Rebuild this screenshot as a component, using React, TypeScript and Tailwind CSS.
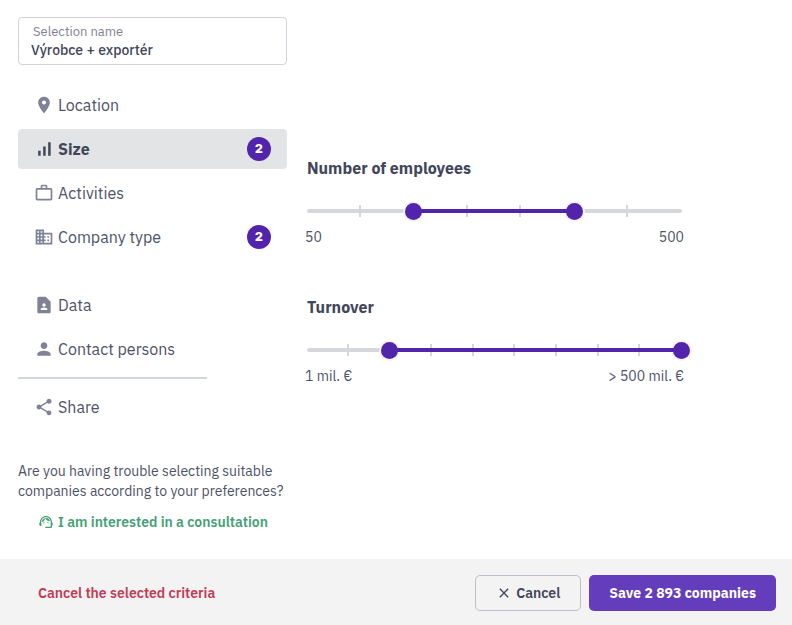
import { ReactNode, useState } from "react";
import { IconType } from "react-icons";
import {
  MdBusiness,
  MdClose,
  MdContactPage,
  MdLocationOn,
  MdPerson,
  MdShare,
  MdSignalCellularAlt,
  MdSupportAgent,
  MdWorkOutline,
} from "react-icons/md";
import clsx from "clsx";

type NavItemProps = {
  icon: IconType;
  label: string;
  count?: number;
  active?: boolean;
  onClick: () => void;
};

function NavItem({ icon: Icon, label, count, active, onClick }: NavItemProps) {
  return (
    <button
      type="button"
      onClick={onClick}
      aria-current={active ? "page" : undefined}
      className={clsx(
        "flex h-10 w-full items-center gap-1 rounded px-4 text-left text-base",
        active ? "bg-[#e3e4e6] font-bold text-[#41465b]" : "text-[#4d5268]",
      )}
    >
      <Icon className={clsx("size-5", active ? "text-[#41465b]" : "text-[#7f8295]")} />
      <span className="flex-1">{label}</span>
      {count !== undefined && (
        <span className="flex size-6 items-center justify-center rounded-full bg-[#5224ab] font-['Inter',sans-serif] text-xs font-black text-white">
          {count}
        </span>
      )}
    </button>
  );
}

const thumbInput =
  "pointer-events-none absolute top-px -right-2 -left-[9px] h-[17px] appearance-none bg-transparent outline-none [&::-webkit-slider-thumb]:pointer-events-auto [&::-webkit-slider-thumb]:size-[17px] [&::-webkit-slider-thumb]:cursor-pointer [&::-webkit-slider-thumb]:appearance-none [&::-webkit-slider-thumb]:rounded-full [&::-webkit-slider-thumb]:bg-[#5224ab] [&::-webkit-slider-thumb]:shadow-[0_0_0_2px_#f4f4f6]";

type RangeProps = {
  title: string;
  steps: number;
  initial: [number, number];
  minLabel: string;
  maxLabel: string;
};

function RangeFilter({ title, steps, initial, minLabel, maxLabel }: RangeProps) {
  const [low, setLow] = useState(initial[0]);
  const [high, setHigh] = useState(initial[1]);
  const ticks = Array.from({ length: steps - 1 }, (_, i) => i + 1);

  return (
    <section>
      <h2 className="text-base leading-6 font-bold text-[#41465b]">{title}</h2>
      <div className="relative mt-[22px] h-[18px]">
        <div className="absolute inset-x-0 top-[7px] h-1 rounded-full bg-[#d5d7dd]" />
        {ticks.map((tick) => (
          <div
            key={tick}
            className="absolute top-[3px] h-3 w-0.5 -translate-x-full bg-[#d5d7dd]"
            style={{ left: `${(tick / steps) * 100}%` }}
          />
        ))}
        <input
          type="range"
          aria-label={`${title} from`}
          min={0}
          max={steps}
          value={low}
          onChange={(e) => setLow(Math.min(Number(e.target.value), high))}
          className={thumbInput}
        />
        <input
          type="range"
          aria-label={`${title} to`}
          min={0}
          max={steps}
          value={high}
          onChange={(e) => setHigh(Math.max(Number(e.target.value), low))}
          className={thumbInput}
        />
        {/* sits above the thumbs so their halo does not cut the bar */}
        <div
          className="pointer-events-none absolute top-[7px] h-1 bg-[#5224ab]"
          style={{ left: `${(low / steps) * 100}%`, right: `${100 - (high / steps) * 100}%` }}
        />
      </div>
      <div className="-mx-0.5 mt-[7px] flex justify-between text-sm leading-5 text-[#4d5268]">
        <span>{minLabel}</span>
        <span>{maxLabel}</span>
      </div>
    </section>
  );
}

function NavGroup({ children }: { children: ReactNode }) {
  return <div className="space-y-1">{children}</div>;
}

export default function App() {
  const [name, setName] = useState("Výrobce + exportér");
  const [section, setSection] = useState("Size");

  const item = (icon: IconType, label: string, count?: number) => (
    <NavItem icon={icon} label={label} count={count} active={section === label} onClick={() => setSection(label)} />
  );

  return (
    <div className="flex min-h-screen flex-col bg-white font-['IBM_Plex_Sans','Noto_Sans',sans-serif]">
      <div className="flex flex-1 gap-5 px-[18px] pt-[17px]">
        <aside className="w-[269px] shrink-0">
          <div className="rounded border border-[#cfd2da] px-3 pt-1 pb-1.5">
            <label htmlFor="selection-name" className="block px-0.5 text-[13px] leading-5 text-[#7f8295]">
              Selection name
            </label>
            <input
              id="selection-name"
              value={name}
              onChange={(e) => setName(e.target.value)}
              className="block h-4 w-full text-sm leading-4 font-medium text-[#41465b] outline-none"
            />
          </div>

          <nav className="mt-5">
            <NavGroup>
              {item(MdLocationOn, "Location")}
              {item(MdSignalCellularAlt, "Size", 2)}
              {item(MdWorkOutline, "Activities")}
              {item(MdBusiness, "Company type", 2)}
            </NavGroup>
            <div className="mt-7">
              <NavGroup>
                {item(MdContactPage, "Data")}
                {item(MdPerson, "Contact persons")}
              </NavGroup>
            </div>
            <hr className="my-2 w-[189px] border-t-2 border-[#d3d6dd]" />
            {item(MdShare, "Share")}
          </nav>

          <p className="mt-[34px] text-sm leading-5 text-[#4d5268]">
            Are you having trouble selecting suitable companies according to your preferences?
          </p>
          <a
            href="#consultation"
            className="mt-[11px] ml-5 flex items-center gap-1 text-sm leading-5 font-semibold whitespace-nowrap text-[#459f76]"
          >
            <MdSupportAgent className="size-4" />
            I am interested in a consultation
          </a>
        </aside>

        <main className="w-full max-w-[375px] space-y-12 pt-[139px]">
          <RangeFilter title="Number of employees" steps={7} initial={[2, 5]} minLabel="50" maxLabel="500" />
          <RangeFilter title="Turnover" steps={9} initial={[2, 9]} minLabel="1 mil. €" maxLabel="> 500 mil. €" />
        </main>
      </div>

      <footer className="flex items-center justify-between bg-[#f3f3f3] px-4 pt-4 pb-[14px] text-sm font-semibold">
        <button type="button" className="px-[22px] text-[#c23b55]">
          Cancel the selected criteria
        </button>
        <div className="flex gap-2">
          <button
            type="button"
            className="flex h-9 items-center gap-1 rounded-[5px] border border-[#bcbfca] px-5 text-[#41465b]"
          >
            <MdClose className="size-4" />
            Cancel
          </button>
          <button type="button" className="h-9 rounded-[5px] bg-[#633dbb] px-5 font-bold text-white">
            Save 2 893 companies
          </button>
        </div>
      </footer>
    </div>
  );
}
